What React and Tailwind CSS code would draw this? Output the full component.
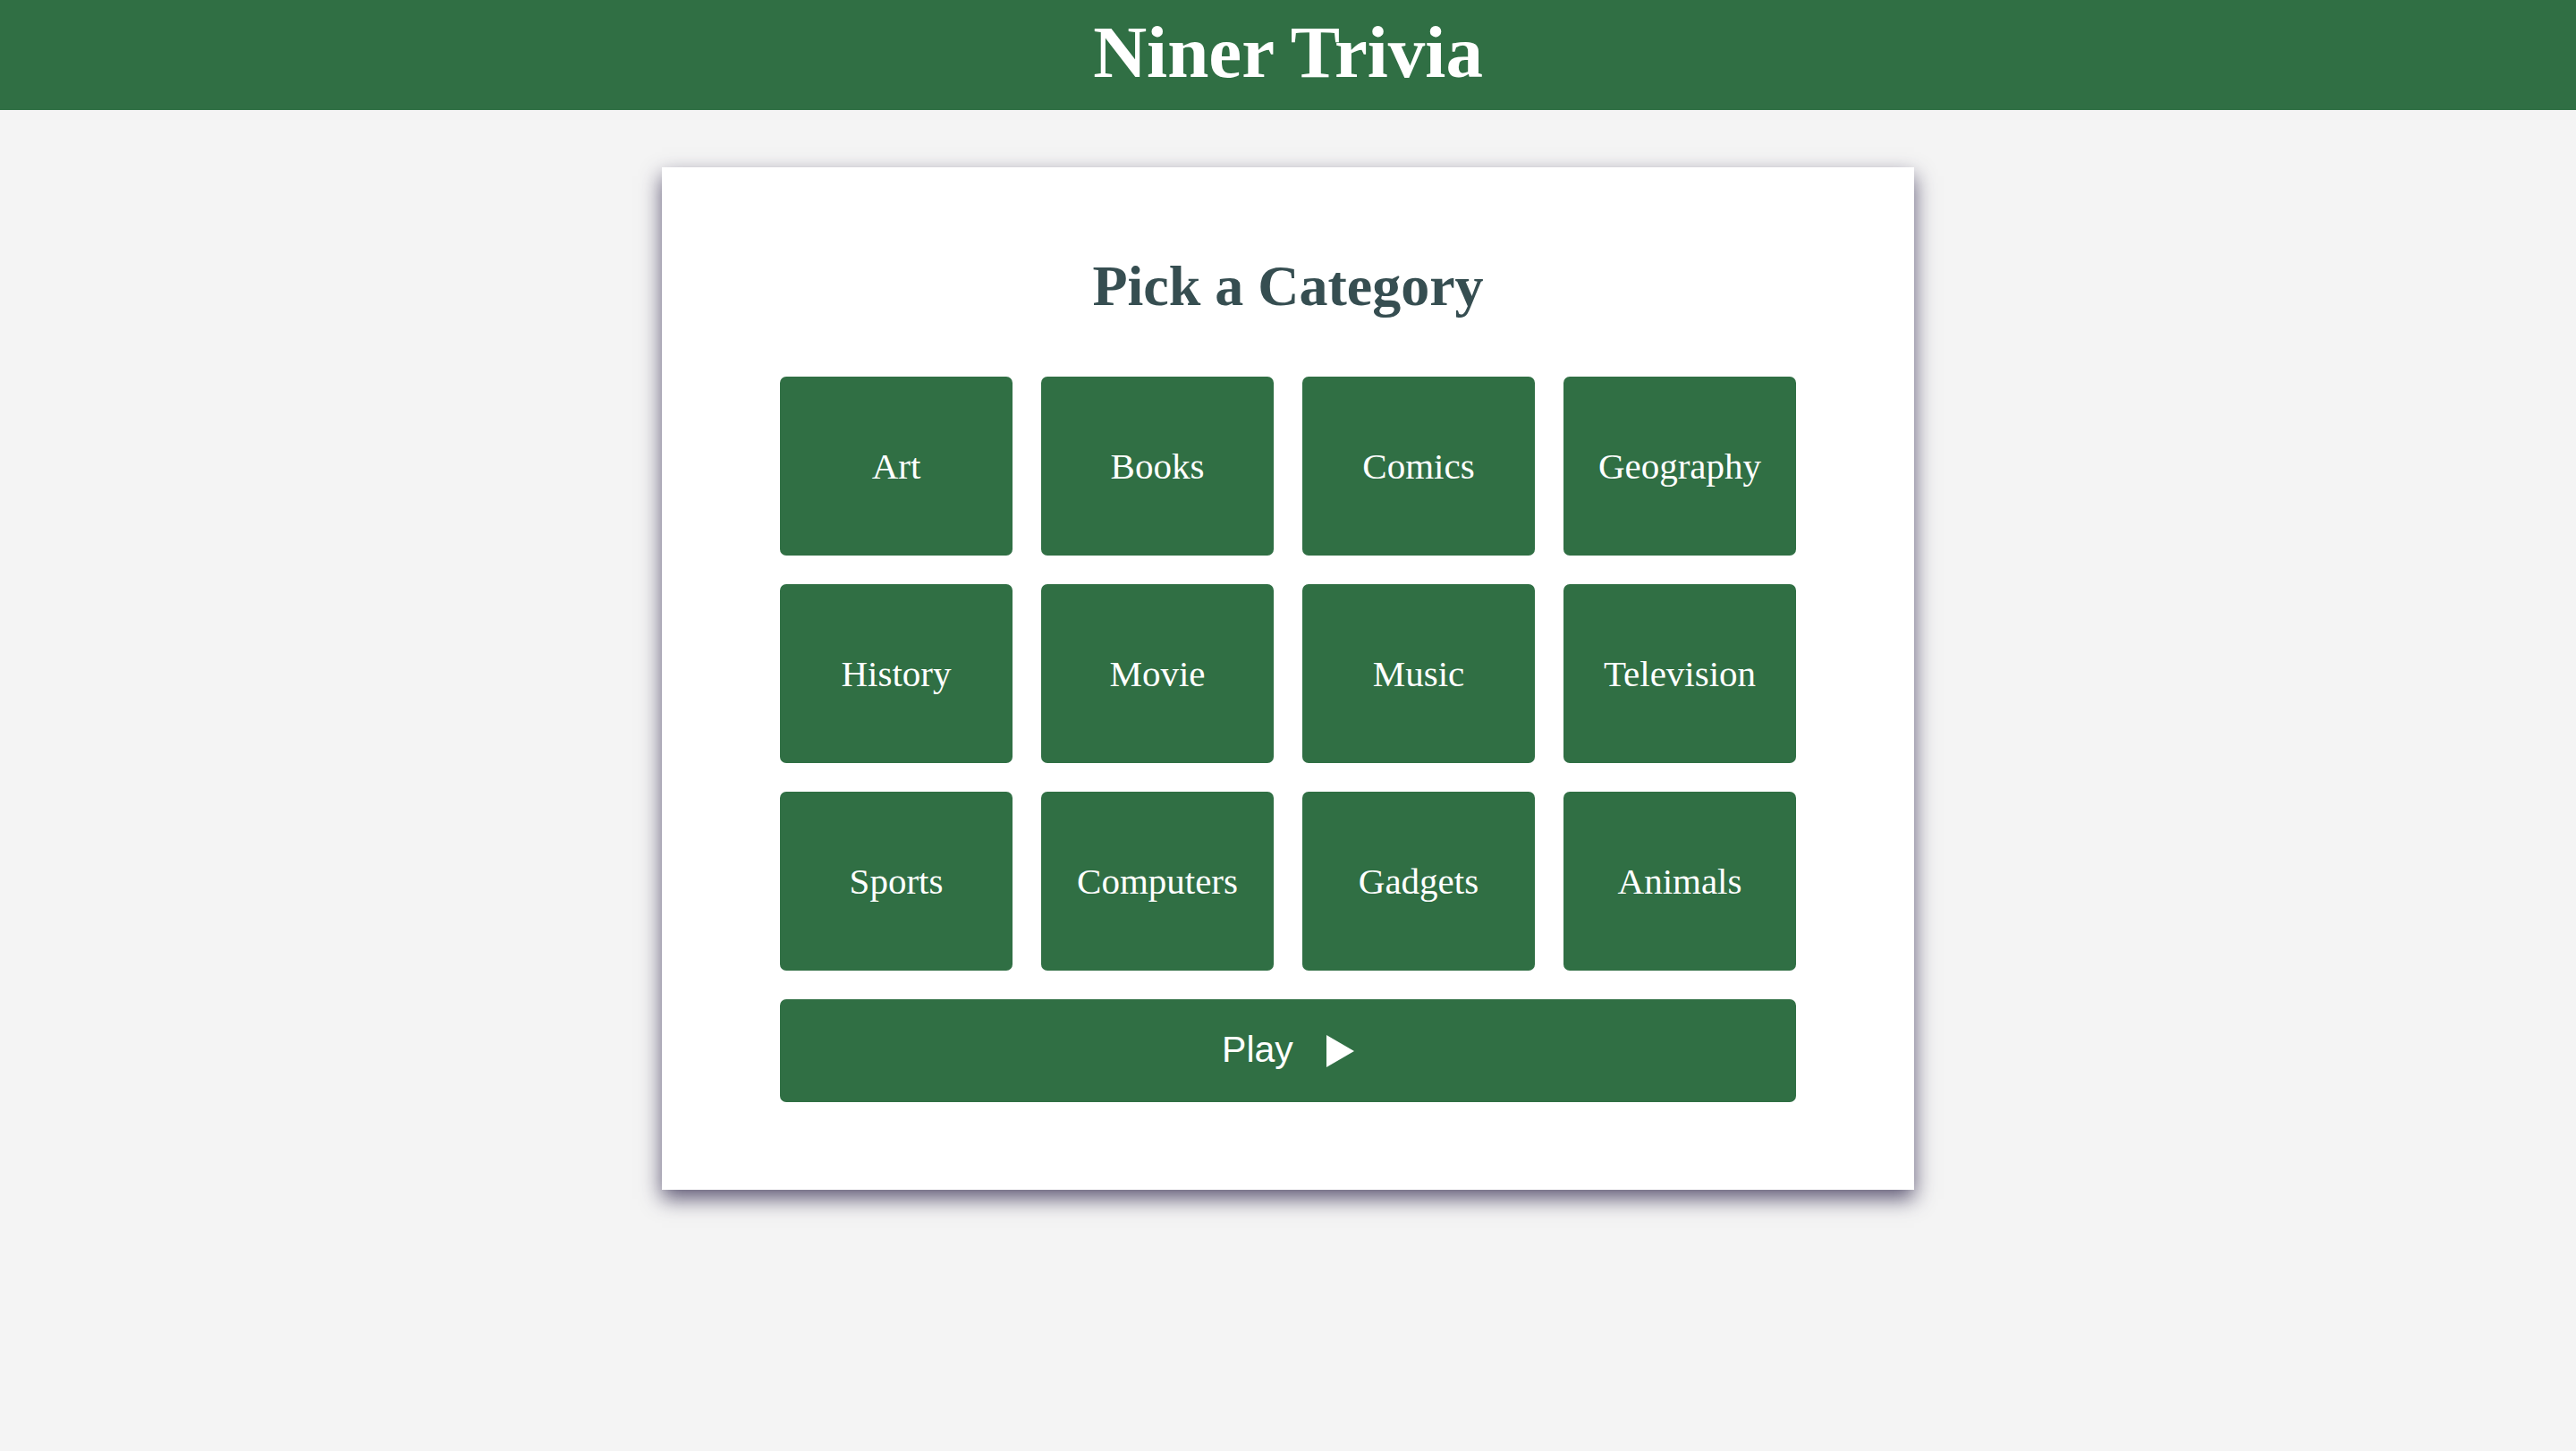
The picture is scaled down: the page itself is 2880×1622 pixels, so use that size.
import React from 'react';

const categories = [
  'Art', 'Books', 'Comics', 'Geography',
  'History', 'Movie', 'Music', 'Television',
  'Sports', 'Computers', 'Gadgets', 'Animals',
];

export default function App() {
  return (
    <div className="min-h-[1622px] bg-[#f4f4f4] font-['Liberation_Serif',serif]">
      <header className="h-[123px] bg-[#306f44] flex justify-center pt-[17px]">
        <h1 className="text-[83px] leading-none font-bold text-white m-0">Niner Trivia</h1>
      </header>

      <main className="flex justify-center pt-[64px]">
        <div className="w-[1400px] bg-white px-[132px] pt-[101px] pb-[98px] shadow-[0_10px_22px_rgba(45,38,75,0.75)]">
          <h2 className="text-[64px] leading-none font-bold text-[#364e51] text-center mb-[69px]">
            Pick a Category
          </h2>

          <div className="grid grid-cols-4 gap-[32px]">
            {categories.map((name) => (
              <button
                key={name}
                className="h-[200px] rounded-[7px] bg-[#306f44] text-white text-[41px] leading-none flex items-center justify-center font-['Liberation_Serif',serif]"
              >
                {name}
              </button>
            ))}
          </div>

          <button className="mt-[32px] w-full h-[115px] rounded-[7px] bg-[#306f44] text-white flex items-center justify-center gap-[37px] font-['Liberation_Sans',Arial,sans-serif] text-[41px] leading-none">
            <span className="-mt-[2px]">Play</span>
            <svg width="31" height="36" viewBox="0 0 31 36">
              <polygon points="0,0 31,18 0,36" fill="white" />
            </svg>
          </button>
        </div>
      </main>
    </div>
  );
}
